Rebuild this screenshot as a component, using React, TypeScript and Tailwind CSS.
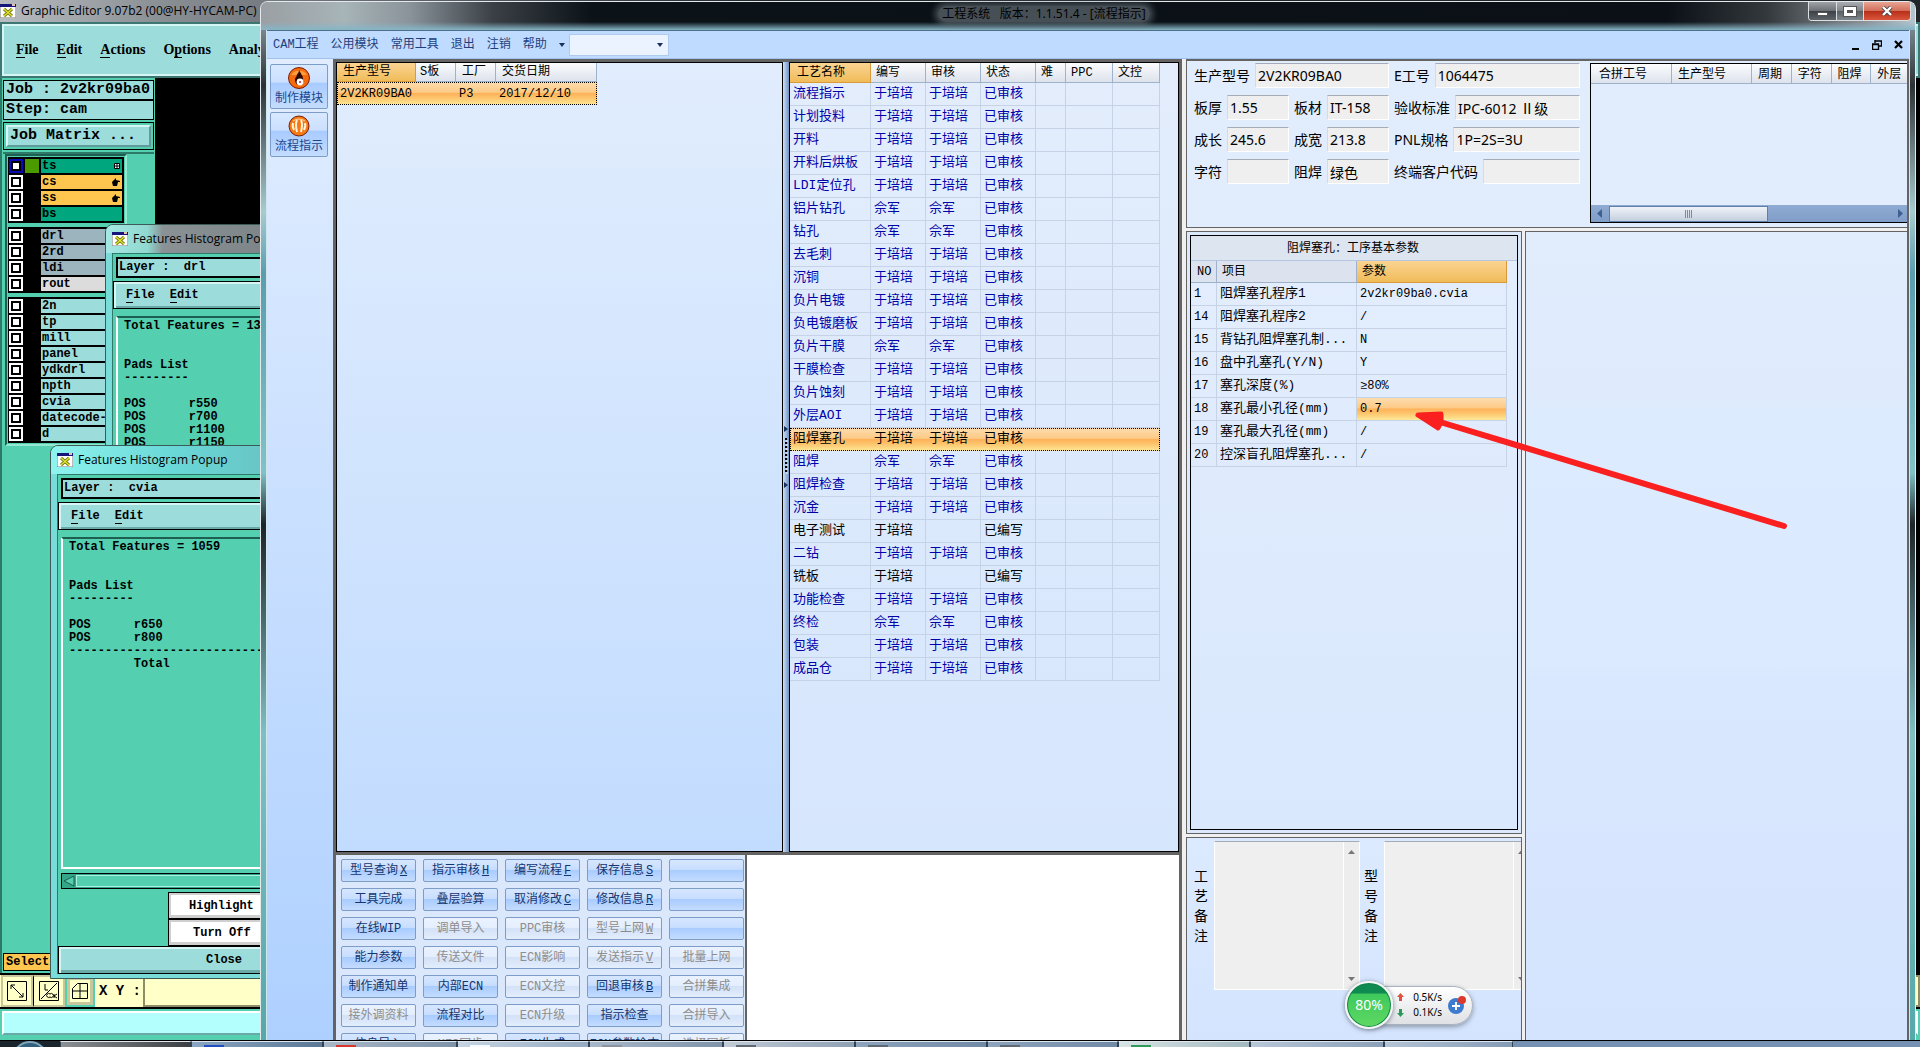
import React from "react";
import clsx from "clsx";

const processRows: string[][] = [
  ["流程指示", "于培培", "于培培", "已审核"],
  ["计划投料", "于培培", "于培培", "已审核"],
  ["开料", "于培培", "于培培", "已审核"],
  ["开料后烘板", "于培培", "于培培", "已审核"],
  ["LDI定位孔", "于培培", "于培培", "已审核"],
  ["铝片钻孔", "佘军", "佘军", "已审核"],
  ["钻孔", "佘军", "佘军", "已审核"],
  ["去毛刺", "于培培", "于培培", "已审核"],
  ["沉铜", "于培培", "于培培", "已审核"],
  ["负片电镀", "于培培", "于培培", "已审核"],
  ["负电镀磨板", "于培培", "于培培", "已审核"],
  ["负片干膜", "佘军", "佘军", "已审核"],
  ["干膜检查", "于培培", "于培培", "已审核"],
  ["负片蚀刻", "于培培", "于培培", "已审核"],
  ["外层AOI", "于培培", "于培培", "已审核"],
  ["阻焊塞孔", "于培培", "于培培", "已审核"],
  ["阻焊", "佘军", "佘军", "已审核"],
  ["阻焊检查", "于培培", "于培培", "已审核"],
  ["沉金", "于培培", "于培培", "已审核"],
  ["电子测试", "于培培", "", "已编写"],
  ["二钻", "于培培", "于培培", "已审核"],
  ["铣板", "于培培", "", "已编写"],
  ["功能检查", "于培培", "于培培", "已审核"],
  ["终检", "佘军", "佘军", "已审核"],
  ["包装", "于培培", "于培培", "已审核"],
  ["成品仓", "于培培", "于培培", "已审核"],
];

const paramRows: string[][] = [
  ["1", "阻焊塞孔程序1", "2v2kr09ba0.cvia"],
  ["14", "阻焊塞孔程序2", "/"],
  ["15", "背钻孔阻焊塞孔制...", "N"],
  ["16", "盘中孔塞孔(Y/N)", "Y"],
  ["17", "塞孔深度(%)", "≥80%"],
  ["18", "塞孔最小孔径(mm)", "0.7"],
  ["19", "塞孔最大孔径(mm)", "/"],
  ["20", "控深盲孔阻焊塞孔...", "/"],
];

// label, shortcut letter, disabled
type ActionDef = [string, string?, boolean?];

const actions: ActionDef[] = [
  ["型号查询", "X"], ["指示审核", "H"], ["编写流程", "F"], ["保存信息", "S"], [""],
  ["工具完成"], ["叠层验算"], ["取消修改", "C"], ["修改信息", "R"], [""],
  ["在线WIP"], ["调单导入", "", true], ["PPC审核", "", true], ["型号上网", "W", true], [""],
  ["能力参数"], ["传送文件", "", true], ["ECN影响", "", true], ["发送指示", "V", true], ["批量上网", "", true],
  ["制作通知单"], ["内部ECN"], ["ECN文控", "", true], ["回退审核", "B"], ["合拼集成", "", true],
  ["接外调资料", "", true], ["流程对比"], ["ECN升级", "", true], ["指示检查"], ["合拼导入", "", true],
  ["信息导入"], ["MES同步", "", true], ["ECN生成"], ["ECN参数检查"], ["选择同板", "", true],
];

const layerGroups = [
  [
    { name: "ts", bg: "bg-[#00a67d]", mark: "grid", active: true },
    { name: "cs", bg: "bg-[#ffc64f]", mark: "hand" },
    { name: "ss", bg: "bg-[#ffc64f]", mark: "hand" },
    { name: "bs", bg: "bg-[#00a67d]" },
  ],
  [
    { name: "drl", bg: "bg-[#9bb4be]" },
    { name: "2rd", bg: "bg-[#9bb4be]" },
    { name: "ldi", bg: "bg-[#9bb4be]" },
    { name: "rout", bg: "bg-[#dcdcdc]" },
  ],
  [
    { name: "2n", bg: "bg-[#9cdcdb]" },
    { name: "tp", bg: "bg-[#9cdcdb]" },
    { name: "mill", bg: "bg-[#9cdcdb]" },
    { name: "panel", bg: "bg-[#9cdcdb]" },
    { name: "ydkdrl", bg: "bg-[#9cdcdb]" },
    { name: "npth", bg: "bg-[#9cdcdb]" },
    { name: "cvia", bg: "bg-[#9cdcdb]" },
    { name: "datecode-", bg: "bg-[#9cdcdb]" },
    { name: "d", bg: "bg-[#9cdcdb]" },
  ],
] as { name: string; bg: string; mark?: string; active?: boolean }[][];

const monoText = "font-['Liberation_Mono','Noto_Sans_CJK_SC',monospace]";
const headBg = "bg-linear-to-b from-[#fbfcfd] to-[#dde2ec]";
const headActive = "bg-linear-to-b from-[#fbd492] to-[#f0bc58]";
const rowActive =
  "bg-[linear-gradient(#fddcae,#fdca86_45%,#ffb259_50%,#fdc56d_70%,#fee998)]";

const XIcon = () => (
  <svg width="16" height="14" viewBox="0 0 16 14" className="shrink-0">
    <rect width="16" height="14" fill="#fff" stroke="#777" />
    <rect width="16" height="3" fill="#15157c" />
    <rect x="12" width="3" height="2" fill="#e8c0b0" />
    <path d="M4 5l8 7M12 5l-8 7" stroke="#6e7410" strokeWidth="3" />
    <path d="M4 5l8 7M12 5l-8 7" stroke="#e3e32a" strokeWidth="1.4" />
  </svg>
);

const LayerList = () => (
  <div className="flex w-[122px] flex-col gap-1 border-2 border-[#1d5f50] border-r-[#93e8d2] border-b-[#93e8d2] p-px">
    {layerGroups.map((group, i) => (
      <div key={i} className="bg-black pt-px pb-px">
        {group.map((l) => (
          <div key={l.name} className="flex h-4 items-center gap-0.5 pl-px">
            <span
              className={clsx(
                "flex h-[14px] w-[14px] items-center justify-center",
                l.active ? "bg-[#0a0ab4]" : "bg-white"
              )}
            >
              <span className="h-[10px] w-[10px] border-2 border-black bg-white" />
            </span>
            <span className={clsx("h-[14px] w-[14px]", l.active && "bg-[#4a9a00]")} />
            <span
              className={clsx(
                "mr-0.5 flex h-[14px] flex-1 items-center justify-between overflow-hidden pr-0.5 pl-px text-xs leading-[14px] font-bold",
                l.bg
              )}
            >
              {l.name}
              {l.mark === "grid" && (
                <svg width="6" height="6" viewBox="0 0 6 6">
                  <path d="M.5.5h5v5h-5zM3 0v6M0 3h6" fill="#fff" stroke="#000" />
                </svg>
              )}
              {l.mark === "hand" && (
                <svg width="8" height="8" viewBox="0 0 8 8">
                  <path d="M0 4L4 0v2l4 1v1H6l-1 4H1z" />
                </svg>
              )}
            </span>
          </div>
        ))}
      </div>
    ))}
  </div>
);

const HistogramPopup = ({
  layer,
  body,
  className,
  titleClass,
  children,
}: {
  layer: string;
  body: string;
  className: string;
  titleClass: string;
  children?: React.ReactNode;
}) => (
  <div
    className={clsx(
      "absolute flex flex-col overflow-hidden rounded-tl-lg border border-[#3b5a58] bg-[#79dcd8] pl-1.5 font-['Liberation_Mono',monospace]",
      className
    )}
  >
    <div
      className={clsx(
        "-ml-1.5 flex h-7 shrink-0 items-center gap-[5px] pl-1.5 font-['Open_Sans',sans-serif] text-xs text-black",
        titleClass
      )}
    >
      <XIcon />
      <span className="whitespace-nowrap">Features Histogram Popup</span>
    </div>
    <div className="flex flex-1 flex-col border-t border-l border-[#2e7a68] bg-[#54cfb0] text-xs font-bold">
      <div className="mt-[3px] ml-[3px] h-[21px] border-2 border-r-0 border-black bg-[#9cdcdb] pl-px leading-4 whitespace-pre">
        {"Layer :  " + layer}
      </div>
      <div className="mt-[3px] flex h-7 gap-[15px] border border-r-0 border-black bg-[#9cdcdb] pl-3 leading-6 shadow-[inset_2px_2px_0_#d6f6f5,inset_0_-2px_0_#6aa9a8]">
        <button>
          <span className="border-b border-black">F</span>ile
        </button>
        <button>
          <span className="border-b border-black">E</span>dit
        </button>
      </div>
      <pre className="mt-[7px] ml-[3px] h-[332px] border-2 border-r-0 border-t-[#1d5f50] border-b-white border-l-white pt-0.5 pl-1.5 font-['Liberation_Mono',monospace] leading-[13px]">
        {body}
      </pre>
      {children}
    </div>
  </div>
);

const GraphicEditor = () => (
  <div className="absolute inset-0 flex flex-col bg-black font-['Liberation_Mono',monospace] text-black">
    <div className="flex h-[22px] shrink-0 items-center gap-[5px] bg-[linear-gradient(90deg,#b8bcc0,#8c9196_8%,#747a80_14%,#20262a_40%)] font-['Open_Sans',sans-serif] text-xs">
      <XIcon />
      <span className="whitespace-nowrap">Graphic Editor 9.07b2 (00@HY-HYCAM-PC)</span>
    </div>
    <div className="flex h-14 shrink-0 items-center gap-[18px] border-2 border-[#3c7773] bg-[#9cdcdb] pl-3.5 font-['Liberation_Serif',serif] text-sm font-bold shadow-[inset_2px_2px_0_#d6f6f5,inset_0_-2px_0_#d6f6f5]">
      {["File", "Edit", "Actions"].map((m) => (
        <button key={m}>
          <span className="border-b border-black">{m[0]}</span>
          {m.slice(1)}
        </button>
      ))}
      <button>
        O<span className="border-b border-black">p</span>tions
      </button>
      <button>Analysis</button>
    </div>
    <div className="flex min-h-0 flex-1">
      <div className="flex w-[155px] flex-col border-l-2 border-[#2e7a68] bg-[#54cfb0] px-px pt-0.5">
        <div className="border border-black bg-[#9cdcdb] text-[15px] leading-[18px] font-bold whitespace-nowrap">
          <div className="border-b-2 border-black pl-0.5">Job : 2v2kr09ba0</div>
          <div className="pl-0.5">Step: cam</div>
        </div>
        <div className="mt-0.5 border border-black p-0.5">
          <button className="block h-[22px] w-full border-2 border-t-[#d6f6f5] border-r-[#5f9c9b] border-b-[#5f9c9b] border-l-[#d6f6f5] bg-[#9cdcdb] pl-0.5 text-left text-[15px] leading-[18px] font-bold">
            Job Matrix ...
          </button>
        </div>
        <div className="mt-0.5 flex-1 border-t-2 border-[#2e7a68] pl-0.5">
          <LayerList />
        </div>
        <div className="mb-0.5 w-[60px] border border-black bg-[#ffc64f] pl-0.5 text-xs leading-4 font-bold">
          Select
        </div>
      </div>
      <div className="flex-1 bg-black" />
    </div>
    <div className="flex h-[34px] shrink-0 border-t-2 border-black bg-[#ffffc8] pl-px">
      <button className="flex w-8 items-center justify-center border-2 border-[#c8c69a]" aria-label="Zoom area">
        <svg width="20" height="20" viewBox="0 0 20 20" fill="none" stroke="#000">
          <path d="M.5.5h19v19H.5zM4 4l12 12M4 8V4h4M16 12v4h-4" />
        </svg>
      </button>
      <button className="flex w-8 items-center justify-center border-2 border-l border-[#c8c69a] border-l-black" aria-label="Units">
        <svg width="20" height="20" viewBox="0 0 20 20" fill="none" stroke="#000">
          <path d="M.5.5h19v19H.5zM2 18L18 2M6 3v6h3M11 13a2 2 0 100 3 2 2 0 100-3M18 13l-3 2 3 2M15 13v4" />
        </svg>
      </button>
      <button className="flex w-[30px] items-center justify-center border-2 border-[#54cfb0] bg-[#ffffc8] shadow-[inset_0_0_0_3px_#c9c79b]" aria-label="Grid">
        <svg width="16" height="16" viewBox="0 0 16 16" fill="none" stroke="#000">
          <path d="M.5 5.5l5-5h10v15H.5zM8 .5v15M.5 8h15" />
        </svg>
      </button>
      <label htmlFor="xy" className="w-12 pl-1 text-sm leading-[32px] font-bold whitespace-nowrap">
        X Y :
      </label>
      <input id="xy" className="flex-1 border-2 border-[#8f8d66] bg-[#ffffc8]" />
    </div>
    <div className="h-10 shrink-0 border-t-2 border-black bg-[#54cfb0] p-0.5">
      <div className="h-6 border-2 border-white border-b-[#6aa9a8] bg-[#b2fffd]" />
    </div>
  </div>
);

const Caret = ({ className }: { className?: string }) => (
  <svg width="6" height="4" viewBox="0 0 6 4" className={className}>
    <path d="M0 0h6L3 4z" fill="#1a2f5c" />
  </svg>
);

const TitleBar = () => (
  <div className="relative flex h-7 shrink-0 items-start justify-center rounded-t-md bg-[linear-gradient(90deg,#9a9fa3,#a7b4b8_5%,#8a939a_9%,#3a4046_14%,#0b1218_20%,#0a1016_85%,#33383c_91%,#8d9298_97%,#b5c6cf)] pr-[88px]">
    <div className="absolute inset-x-0 bottom-0 h-2 bg-linear-to-b from-transparent to-[#86b5c6]" />
    <h1 className="relative mt-1 rounded-full bg-[#6f7980]/60 px-1 font-['Noto_Sans','Noto_Sans_CJK_SC',sans-serif] text-xs leading-4 whitespace-pre text-black shadow-[0_0_6px_3px_#6f798099]">
      工程系统   版本：1.1.51.4 - [流程指示]
    </h1>
    <div className="absolute top-0 right-1 flex h-[19px] overflow-hidden rounded-b-sm border border-t-0 border-[#dcdfe2]">
      <button aria-label="最小化" className="flex w-7 items-end justify-center border-r border-[#dcdfe2] bg-[linear-gradient(#9fa2a6,#6e7378_48%,#3c4247_52%,#5d646a)] pb-1">
        <span className="h-1 w-[11px] border border-[#555] bg-white" />
      </button>
      <button aria-label="最大化" className="flex w-[27px] items-center justify-center border-r border-[#dcdfe2] bg-[linear-gradient(#a9adb2,#7f858a_48%,#596066_52%,#7f868c)]">
        <span className="h-[9px] w-3 border-[3px] border-white bg-[#555] outline-1 outline-[#555]" />
      </button>
      <button aria-label="关闭" className="flex w-[46px] items-center justify-center bg-[linear-gradient(#e9a494,#d2705c_48%,#b9301a_52%,#d9563c)]">
        <svg width="12" height="10" viewBox="0 0 12 10">
          <path d="M2 1l8 8M10 1L2 9" stroke="#444" strokeWidth="4" />
          <path d="M2 1l8 8M10 1L2 9" stroke="#fff" strokeWidth="2.4" />
        </svg>
      </button>
    </div>
  </div>
);

const MenuBar = () => (
  <div className="flex h-[29px] shrink-0 items-center border-t border-b border-t-[#4d7088] border-b-[#a2c2ec] bg-[#bfdbff] pl-1.5 text-xs leading-4 text-[#1e3f7d]">
    <nav className={clsx("flex items-center gap-3 whitespace-nowrap", monoText)}>
      {["CAM工程", "公用模块", "常用工具", "退出", "注销", "帮助"].map((m) => (
        <button key={m}>{m}</button>
      ))}
      <Caret />
    </nav>
    <div className="relative ml-1">
      <select aria-label="快捷查询" className="block h-[22px] w-[100px] appearance-none border border-[#aecaf0] bg-[#eaf3ff]" />
      <Caret className="absolute top-[9px] right-1.5" />
    </div>
    <div className="ml-auto flex items-center gap-3 pr-1.5">
      <button aria-label="子窗口最小化">
        <svg width="8" height="10" viewBox="0 0 8 10"><path d="M0 8h7v2H0z" /></svg>
      </button>
      <button aria-label="子窗口还原">
        <svg width="10" height="10" viewBox="0 0 10 10" fill="none" stroke="#000">
          <path d="M3 1h6.5v5H7M3 0v3M.5 4h6v5.500h-6zM0 4.500h7" strokeWidth="1.4" />
        </svg>
      </button>
      <button aria-label="子窗口关闭">
        <svg width="9" height="9" viewBox="0 0 9 9"><path d="M1 1l7 7M8 1L1 8" stroke="#000" strokeWidth="2.2" /></svg>
      </button>
    </div>
  </div>
);

const Sidebar = () => (
  <aside className="flex w-[66px] shrink-0 flex-col gap-[3px] bg-linear-to-b from-[#e1edff] to-[#aed0ff] pt-[5px] pr-[5px] pl-[3px]">
    <button className="flex h-[45px] flex-col items-center rounded-xs border border-[#7e9cc8] bg-[linear-gradient(#d8e8ff,#cbdfff_40%,#a8cbff_42%,#c4dcff)] pt-0.5 text-xs leading-4 text-[#1b468e]">
      <svg width="22" height="22" viewBox="0 0 22 22">
        <circle cx="11" cy="11" r="10.500" fill="#f46a0c" stroke="#7d1e05" />
        <path d="M3 8a9 8 0 0116 0z" fill="#ff9c3c" />
        <path d="M11 3c1 3 4 5 4 9s-2 6-4 6-4-2-4-5 2-3 2-6c1 0 2-2 2-4z" fill="#2a0a02" />
        <circle cx="12" cy="15" r="3.400" fill="#fff" />
        <circle cx="12" cy="15" r="1" fill="#b23" />
      </svg>
      <span className="mt-px">制作模块</span>
    </button>
    <button className="flex h-[45px] flex-col items-center rounded-xs border border-[#7e9cc8] bg-[linear-gradient(#d8e8ff,#cbdfff_40%,#a8cbff_42%,#c4dcff)] pt-0.5 text-xs leading-4 text-[#1b468e]">
      <svg width="22" height="22" viewBox="0 0 22 22" fill="none">
        <circle cx="11" cy="11" r="10" fill="#f57a16" stroke="#7d1e05" />
        <path d="M5 8c-1 3 0 5 1 7M9 5c-2 4-1 8 0 12M13 5c2 4 1 8 0 12M17 8c1 3 0 5-1 7" stroke="#fff3d8" strokeWidth="2" />
        <path d="M5 6q6-4 12 0" stroke="#ffd9a0" />
      </svg>
      <span className="mt-px">流程指示</span>
    </button>
  </aside>
);

const JobTable = () => (
  <div className="w-[447px] shrink-0 border border-black bg-linear-to-b from-[#e1edfd] to-[#c2dcff]">
    <table className={clsx("w-[260px] table-fixed border-separate border-spacing-0 text-left text-xs leading-4", monoText)}>
      <thead>
        <tr className="h-[19px]">
          <th className={clsx("w-[79px] border-r border-b border-[#d99a3c] pl-1.5 font-normal", headActive)}>生产型号</th>
          <th className={clsx("w-10 border-r border-b border-[#9fb2cc] pl-1 font-normal", headBg)}>S板</th>
          <th className={clsx("w-10 border-r border-b border-[#9fb2cc] pl-1.5 font-normal", headBg)}>工厂</th>
          <th className={clsx("border-r border-b border-[#9fb2cc] pl-1.5 font-normal", headBg)}>交货日期</th>
        </tr>
      </thead>
      <tbody>
        <tr className={clsx("h-[23px] outline-1 -outline-offset-1 outline-black outline-dotted", rowActive)}>
          <td className="pl-[3px]">2V2KR09BA0</td>
          <td />
          <td className="pl-[3px]">P3</td>
          <td className="pl-[3px]">2017/12/10</td>
        </tr>
      </tbody>
    </table>
  </div>
);

const ProcessTable = () => (
  <div className="w-[390px] shrink-0 border border-black bg-linear-to-b from-[#e3edfc] to-[#d6e6fd]">
    <table className={clsx("w-[370px] table-fixed border-separate border-spacing-0 text-left text-[13px] leading-4", monoText)}>
      <colgroup>
        <col className="w-[81px]" />
        <col className="w-[55px]" />
        <col className="w-[55px]" />
        <col className="w-[55px]" />
        <col className="w-[30px]" />
        <col className="w-[47px]" />
        <col className="w-[47px]" />
      </colgroup>
      <thead>
        <tr className="h-5 text-xs leading-4">
          {["工艺名称", "编写", "审核", "状态", "难", "PPC", "文控"].map((h, i) => (
            <th
              key={h}
              className={clsx(
                "border-r border-b font-normal whitespace-nowrap",
                i === 0 ? "border-[#d99a3c] pl-[7px]" : "border-[#9fb2cc] pl-[5px]",
                i === 0 ? headActive : headBg
              )}
            >
              {h}
            </th>
          ))}
        </tr>
      </thead>
      <tbody>
        {processRows.map((row) => {
          const selected = row[0] === "阻焊塞孔";
          const black = selected || row[3] === "已编写";
          return (
            <tr
              key={row[0]}
              className={clsx(
                "h-[23px]",
                black ? "text-black" : "text-[#0000a8]",
                selected && "outline-1 -outline-offset-1 outline-black outline-dotted",
                selected && rowActive
              )}
            >
              {[...row, "", "", ""].map((cell, i) => (
                <td
                  key={i}
                  className={clsx(
                    "border-r border-b pl-[3px] whitespace-nowrap",
                    selected ? "border-transparent" : "border-[#c6d3e6]"
                  )}
                >
                  {cell}
                </td>
              ))}
            </tr>
          );
        })}
      </tbody>
    </table>
  </div>
);

const Splitter = () => (
  <div className="flex w-1.5 shrink-0 flex-col items-center justify-center gap-1.5 bg-linear-to-r from-[#cfe0f7] to-[#6f93c4]">
    <svg width="4" height="62" viewBox="0 0 4 62">
      <path d="M0 0l4 3-4 3zM0 56l4 3-4 3z" fill="#1a2f5c" />
      <path d="M2 12v36" stroke="#000" strokeWidth="2" strokeDasharray="2 2" />
      <path d="M3 14v36" stroke="#fff" strokeDasharray="2 2" />
    </svg>
  </div>
);

const ActionPanel = () => (
  <div className="grid w-[411px] shrink-0 auto-rows-[23px] grid-cols-[repeat(5,75px)] gap-x-[7px] gap-y-1.5 border-r-2 border-[#646464] bg-[#dbe8fc] pt-1 pl-[5px]">
    {actions.map(([label, key, disabled], i) => (
      <button
        key={i}
        disabled={disabled}
        className={clsx(
          "rounded-xs border border-[#7e9cc8] text-xs leading-4 whitespace-nowrap",
          monoText,
          disabled
            ? "bg-[linear-gradient(#eaf2ff,#e4eefd_45%,#d3e2f8_50%,#e3edfc)] text-[#8d8d8d]"
            : "bg-[linear-gradient(#d6e6ff,#c8deff_45%,#a9ccff_50%,#c4dcff)] text-[#15356e]"
        )}
      >
        {label}
        {key && <u className="ml-0.5">{key}</u>}
      </button>
    ))}
  </div>
);

const Field = ({
  id,
  label,
  value,
  className,
}: {
  id: string;
  label: string;
  value: string;
  className: string;
}) => (
  <div className={clsx("flex items-center gap-[5px]", className)}>
    <label htmlFor={id} className="shrink-0 whitespace-nowrap">
      {label}
    </label>
    <input
      id={id}
      readOnly
      defaultValue={value}
      className="h-[25px] w-full min-w-0 flex-1 border border-t-[#a5acb8] border-r-white border-b-white border-l-[#d5dbe5] bg-[#efefef] px-0.5"
    />
  </div>
);

const JobForm = () => (
  <form className="flex w-[403px] shrink-0 flex-col gap-[7px] pt-0.5 pr-2.5 pl-[7px] font-['Noto_Sans','Noto_Sans_CJK_SC',sans-serif] text-sm leading-5">
    <div className="flex gap-[5px]">
      <Field id="model" label="生产型号" value="2V2KR09BA0" className="w-[195px]" />
      <Field id="eno" label="E工号" value="1064475" className="flex-1" />
    </div>
    <div className="flex gap-[5px]">
      <Field id="thick" label="板厚" value="1.55" className="w-[95px]" />
      <Field id="material" label="板材" value="IT-158" className="w-[95px]" />
      <Field id="standard" label="验收标准" value="IPC-6012 Ⅱ级" className="flex-1" />
    </div>
    <div className="flex gap-[5px]">
      <Field id="len" label="成长" value="245.6" className="w-[95px]" />
      <Field id="wid" label="成宽" value="213.8" className="w-[95px]" />
      <Field id="pnl" label="PNL规格" value="1P=2S=3U" className="flex-1" />
    </div>
    <div className="flex gap-[5px]">
      <Field id="legend" label="字符" value="" className="w-[95px]" />
      <Field id="mask" label="阻焊" value="绿色" className="w-[95px]" />
      <Field id="customer" label="终端客户代码" value="" className="flex-1" />
    </div>
  </form>
);

const MergeTable = () => (
  <div className="mt-0.5 mb-1 flex min-w-0 flex-1 flex-col justify-between overflow-hidden border border-r-0 border-black bg-[#e1edfd]">
    <table className="w-[320px] table-fixed border-separate border-spacing-0 text-left text-xs leading-4">
      <thead>
        <tr className="h-5">
          <th className={clsx("w-[81px] border-r border-b border-[#9fb2cc] pl-2 font-normal", headBg)}>合拼工号</th>
          <th className={clsx("w-20 border-r border-b border-[#9fb2cc] pl-1.5 font-normal", headBg)}>生产型号</th>
          {["周期", "字符", "阻焊", "外层"].map((h) => (
            <th key={h} className={clsx("border-r border-b border-[#9fb2cc] pl-1.5 font-normal whitespace-nowrap", headBg)}>
              {h}
            </th>
          ))}
        </tr>
      </thead>
    </table>
    <div className="flex h-[17px] items-center bg-linear-to-b from-[#8fabd2] to-[#7f9dc8]">
      <svg width="18" height="9" viewBox="0 0 18 9"><path d="M11 0v9L6 4.500z" fill="#3f5f92" /></svg>
      <div className="flex h-4 w-[159px] items-center justify-center gap-px border border-[#5f7fae] bg-linear-to-b from-[#f0f3f8] to-[#c3cfde]">
        {[0, 1, 2, 3].map((i) => (
          <span key={i} className="h-2 w-px bg-[#7d8ba0]" />
        ))}
      </div>
      <svg width="18" height="9" viewBox="0 0 18 9" className="ml-auto"><path d="M9 0v9l5-4.500z" fill="#3f5f92" /></svg>
    </div>
  </div>
);

const ParamTable = () => (
  <div className="flex-1 border border-black bg-linear-to-b from-[#e3edfd] to-[#d9e8fd]">
    <div className="h-[25px] border-b border-[#b4c6e0] bg-[#dde5f1] pl-24 text-xs leading-6">
      阻焊塞孔：工序基本参数
    </div>
    <table className={clsx("w-[316px] table-fixed border-separate border-spacing-0 text-left text-[13px] leading-4", monoText)}>
      <thead>
        <tr className="h-[22px] text-xs leading-4">
          <th className="w-[26px] border-r border-b border-[#9fb2cc] bg-[#dde3ee] pl-1.5 font-normal">NO</th>
          <th className="w-[140px] border-r border-b border-[#9fb2cc] bg-[#dde3ee] pl-[5px] font-normal">项目</th>
          <th className={clsx("border-r border-b border-[#d99a3c] pl-[5px] font-normal", headActive)}>参数</th>
        </tr>
      </thead>
      <tbody>
        {paramRows.map(([no, item, value]) => (
          <tr key={no} className="h-[23px]">
            <td className="border-r border-b border-[#c6d3e6] pl-[3px] text-xs">{no}</td>
            <td className="overflow-hidden border-r border-b border-[#c6d3e6] pl-[3px] whitespace-nowrap">{item}</td>
            <td className={clsx("border-r border-b border-[#c6d3e6] pl-[3px] text-xs", value === "0.7" && rowActive)}>
              {value}
            </td>
          </tr>
        ))}
      </tbody>
    </table>
  </div>
);

const Remark = ({ id, label, className }: { id: string; label: string; className: string }) => (
  <div className={clsx("flex shrink-0 gap-1.5", className)}>
    <label htmlFor={id} className="mt-6 w-3.5 shrink-0 font-['Noto_Sans_CJK_SC',sans-serif] text-sm leading-5 break-all">
      {label}
    </label>
    <div className="flex min-w-0 flex-1 border border-t-[#a5acb8] border-r-white border-b-white border-l-white bg-[#efefef]">
      <textarea id={id} className="min-w-0 flex-1 resize-none" />
      <div className="flex w-4 shrink-0 flex-col items-center justify-between border-l border-white bg-[#ededed] py-2">
        <svg width="7" height="4" viewBox="0 0 7 4"><path d="M0 4h7L3.500 0z" fill="#777" /></svg>
        <svg width="7" height="4" viewBox="0 0 7 4"><path d="M0 0h7L3.500 4z" fill="#777" /></svg>
      </div>
    </div>
  </div>
);

const EngineeringSystem = () => (
  <div className="absolute top-px right-1 bottom-0 left-[260px] flex flex-col rounded-t-lg border border-b-0 border-[#e3e9ec] bg-[linear-gradient(#9fb0b8,#2b3136_8%,#a7cbd0_20%,#5a9dad_26%,#7fc3c8_45%,#1b2429_50%,#7fbfc4_70%,#55a8a8)] px-[5px]">
    <div className="-mx-[5px] flex flex-col">
      <TitleBar />
    </div>
    <div className="flex min-h-0 flex-1 flex-col border-x border-[#cfe6ee] font-['Liberation_Sans','Noto_Sans_CJK_SC',sans-serif] text-black">
      <MenuBar />
      <div className="flex min-h-0 flex-1">
        <Sidebar />
        <div className="flex shrink-0 flex-col border-x-3 border-t-3 border-[#646464]">
          <div className="flex min-h-0 flex-1">
            <JobTable />
            <Splitter />
            <ProcessTable />
          </div>
          <div className="flex h-[195px] overflow-hidden border-t-3 border-[#646464]">
            <ActionPanel />
            <div className="flex-1 bg-white" />
          </div>
        </div>
        <div className="flex min-w-0 flex-1 flex-col gap-[3px] border-r-2 border-[#646464] bg-[#f0f0f0] pl-1">
          <div className="flex h-[169px] shrink-0 border border-t-2 border-r-0 border-[#646464] bg-[#e1edfd]">
            <JobForm />
            <MergeTable />
          </div>
          <div className="flex min-h-0 flex-1 gap-[3px]">
            <div className="flex w-[336px] shrink-0 flex-col gap-[3px]">
              <div className="flex min-h-0 flex-1 flex-col border border-[#646464] bg-[#dce9fd] p-[3px]">
                <ParamTable />
              </div>
              <div className="flex h-[210px] items-start gap-1 overflow-hidden border border-[#646464] bg-linear-to-b from-[#dbeafe] to-[#d4e4fe] pt-[3px] pl-[7px]">
                <Remark id="craft-remark" label="工艺备注" className="h-[149px] w-[166px]" />
                <Remark id="model-remark" label="型号备注" className="h-[149px] w-[166px]" />
              </div>
            </div>
            <div className="flex-1 border border-r-0 border-[#646464] bg-[linear-gradient(#e1ecfc,#dfebfd_20%,#dcebfe_23%,#dbeafe_53%,#d9e8fe_55%,#d5e4fe)]" />
          </div>
        </div>
      </div>
    </div>
  </div>
);

const SpeedBall = () => (
  <div className="absolute bottom-[18px] left-[1345px] flex items-center">
    <div className="z-10 flex h-12 w-12 items-center justify-center rounded-full border-2 border-[#f3f6f3] bg-[linear-gradient(#0f8a50_22%,#3fc95c_26%,#5fd863)] font-['Noto_Sans',sans-serif] text-sm text-white shadow-[0_1px_5px_#6b7a8c,inset_0_0_0_1px_#12804b]">
      80%
    </div>
    <div className="-ml-6 flex h-[39px] items-center rounded-r-full border border-[#aab2be] bg-linear-to-b from-white to-[#dfe1e4] pr-1.5 pl-[27px] shadow-[0_2px_5px_#8b98aa]">
      <svg width="7" height="24" viewBox="0 0 7 24">
        <path d="M3.500 0L7 4H5v4H2V4H0z" fill="#e2513f" />
        <path d="M3.500 24L0 20h2v-4h3v4h2z" fill="#2a9a5a" />
      </svg>
      <div className="w-[38px] text-right font-['Noto_Sans',sans-serif] text-[10px] leading-[15px]">
        <div>0.5K/s</div>
        <div>0.1K/s</div>
      </div>
      <button aria-label="加速" className="ml-1.5">
        <svg width="18" height="18" viewBox="0 0 18 18">
          <circle cx="8" cy="10" r="8" fill="#3d7bd0" />
          <path d="M8 6v8M4 10h8" stroke="#fff" strokeWidth="1.800" />
          <circle cx="14" cy="4" r="4" fill="#dd3a2e" />
        </svg>
      </button>
    </div>
  </div>
);

const taskButtons = [
  ["w-[131px] from-[#8b9094] to-[#3c4044]", "bg-transparent"],
  ["w-[132px] from-[#8aa6c2] to-[#5b7896]", "bg-[#1f4fc0]"],
  ["w-[134px] from-[#a9b8c8] to-[#7e93a9]", "bg-[#d8382c]"],
  ["w-[132px] from-[#c6d4e2] to-[#96abc1]", "bg-[#f4faff]"],
  ["w-[134px] from-[#a8b8c9] to-[#7f94aa]", "bg-[#8b949e]"],
  ["w-[132px] from-[#c1cbd6] to-[#8fa1b4]", "bg-[#5f6a74]"],
  ["w-[132px] from-[#8ea4bd] to-[#718aa6]", "bg-[#5f6a74]"],
  ["w-[131px] from-[#8ea4bd] to-[#718aa6]", "bg-[#5f6a74]"],
  ["w-[132px] from-[#d8e4e4] to-[#a3b8c0]", "bg-[#2f9a5c]"],
  ["w-[134px] from-[#b8c7d8] to-[#8ba1b9]", "bg-transparent"],
  ["w-[129px] from-[#b4c4d6] to-[#849bb5]", "bg-transparent"],
];

const Taskbar = () => (
  <footer className="absolute inset-x-0 bottom-0 flex h-[7px] border-t border-black bg-[#7591b4]">
    <div className="flex w-[60px] justify-center overflow-hidden bg-[#1a242c]">
      <span className="h-9 w-9 shrink-0 rounded-full border-2 border-[#7fa6b8] bg-[#33607c]" />
    </div>
    {taskButtons.map(([c, icon], i) => (
      <div key={i} className={clsx("flex items-end border border-b-0 border-[#32404f] border-t-[#dfe8f0] bg-linear-to-r pl-3", c)}>
        <span className={clsx("h-0.5 w-5", icon)} />
      </div>
    ))}
  </footer>
);

const App: React.FC = () => {
  return (
    <div className="relative h-screen w-full overflow-hidden bg-black">
      <GraphicEditor />
      <HistogramPopup
        layer="drl"
        className="top-[224px] left-[105px] h-[500px] w-[300px]"
        titleClass="bg-[linear-gradient(90deg,#a6e8e4,#8fd8d0_14%,#8a9296_19%,#6d7377)]"
        body={`Total Features = 1358


Pads List
---------

POS      r550
POS      r700
POS      r1100
POS      r1150`}
      />
      <HistogramPopup
        layer="cvia"
        className="top-[445px] left-[50px] h-[534px] w-[300px] pb-1"
        titleClass="bg-[linear-gradient(90deg,#8ef4ee,#6ad8d8_40%,#66b4b4)]"
        body={`Total Features = 1059


Pads List
---------

POS      r650
POS      r800
------------------------------
         Total`}
      >
        <div className="mt-1 ml-[3px] flex h-4 shrink-0 items-center border border-black bg-[#35a68a]">
          <svg width="14" height="12" viewBox="0 0 14 12">
            <path d="M12 1v10L2 6z" fill="#54cfb0" stroke="#1d5f50" />
          </svg>
          <div className="h-3 flex-1 border border-[#a9f2e0] bg-[#54cfb0]" />
        </div>
        <div className="mt-[3px] ml-[110px] flex flex-col">
          <button className="h-[27px] border border-black bg-white pl-5 text-left leading-[22px] shadow-[inset_2px_2px_0_#cfcfcf,inset_0_-3px_0_#cfcfcf]">
            Highlight
          </button>
          <button className="h-[27px] border border-black bg-white pl-6 text-left leading-[22px] shadow-[inset_2px_2px_0_#cfcfcf,inset_0_-3px_0_#cfcfcf]">
            Turn Off
          </button>
        </div>
        <button className="h-7 shrink-0 border border-black bg-[#9cdcdb] pl-[147px] text-left leading-6 shadow-[inset_2px_2px_0_#d6f6f5,inset_0_-3px_0_#6aa9a8]">
          Close
        </button>
      </HistogramPopup>
      <EngineeringSystem />
      <SpeedBall />

      {/* red pointer to the minimum hole size */}
      <svg className="pointer-events-none absolute top-[408px] left-[1410px]" width="380" height="124" viewBox="0 0 380 124">
        <path d="M30 14L374 118" stroke="#f9201f" strokeWidth="6" strokeLinecap="round" />
        <path d="M8 7L31 6v8l-3 6z" fill="#f9201f" stroke="#f9201f" strokeWidth="5" strokeLinejoin="round" />
      </svg>
      <Taskbar />
    </div>
  );
};

export default App;
